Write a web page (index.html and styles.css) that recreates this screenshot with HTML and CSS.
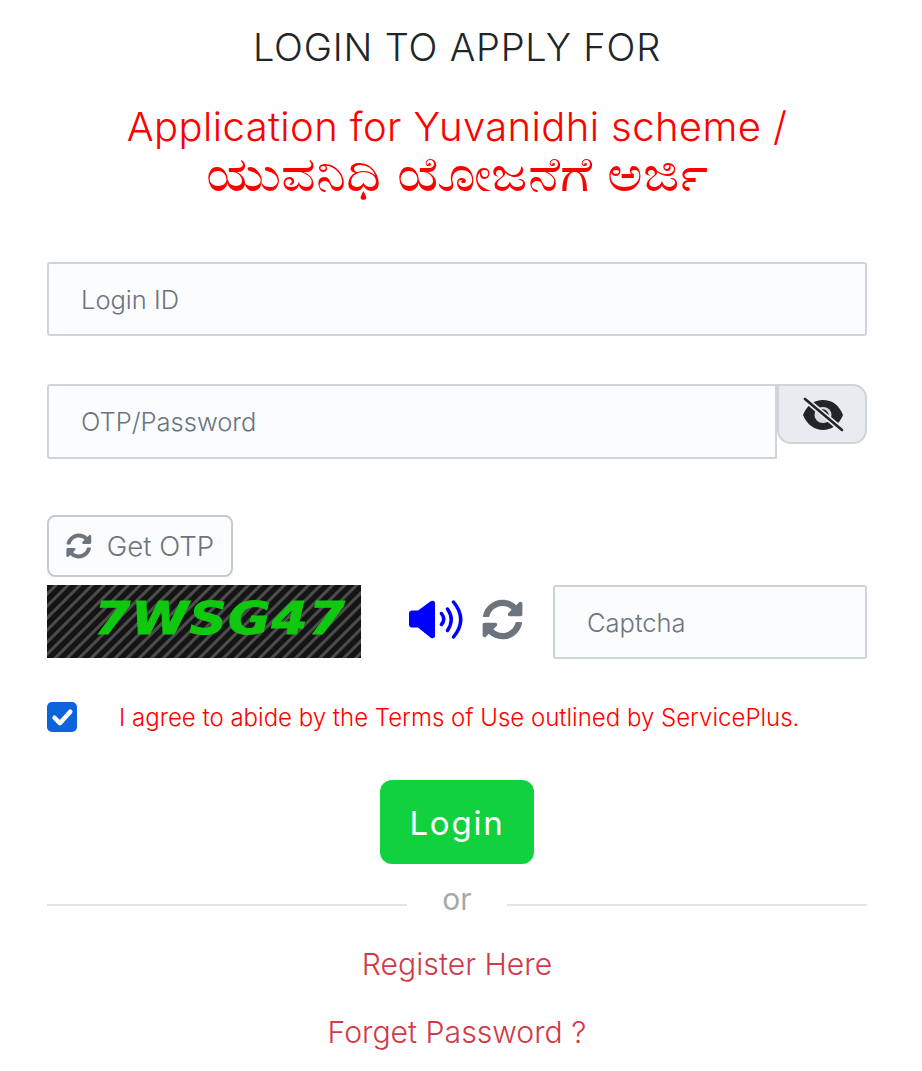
FILE: index.html
```html
<!DOCTYPE html>
<html lang="en">
<head>
  <meta charset="UTF-8">
  <meta name="viewport" content="width=device-width, initial-scale=1.0">
  <title>Login</title>
  <link rel="stylesheet" href="styles.css">
</head>
<body>

  <div class="container">
    <h1 class="title">LOGIN TO APPLY FOR</h1>
    <h2 class="service">Application for Yuvanidhi scheme /<span class="service-kn" lang="kn"><span class="service-kn-text">ಯುವನಿಧಿ ಯೋಜನೆಗೆ ಅರ್ಜಿ</span></span></h2>

    <!-- Login ID -->
    <input class="field field-id" type="text" placeholder="Login ID">

    <!-- Password with eye button -->
    <div class="pass-row">
      <input class="field field-pass" type="text" placeholder="OTP/Password">
      <button class="eye-btn" type="button">
        <svg class="eye-icon" viewBox="0 0 52 46">
          <path d="M7 24C11 14 18 9 27 9s16 5 20 15c-4 10-12 15-20 15S11 34 7 24z" fill="#212529"/>
          <ellipse cx="27" cy="24" rx="8.5" ry="8" fill="#d5dde2"/>
          <path d="M25 18a7 7 0 0 1 8 7l-3 1a4.5 4.5 0 0 0-5-5z" fill="#212529"/>
          <path d="M9 8l37 31" stroke="#e9ecef" stroke-width="6"/>
          <path d="M9 8l37 31" stroke="#212529" stroke-width="2.6" stroke-linecap="round"/>
        </svg>
      </button>
    </div>

    <button class="otp-btn" type="button">
      <svg class="otp-icon" viewBox="0 0 512 512"><path d="M370.72 133.28C339.458 104.008 298.888 87.962 255.848 88c-77.458.068-144.328 53.178-162.791 126.85-1.344 5.363-6.122 9.15-11.651 9.15H24.103c-7.498 0-13.194-6.807-11.807-14.176C33.933 94.924 134.813 8 256 8c66.448 0 126.791 26.136 171.315 68.685L463.03 40.97C478.149 25.851 504 36.559 504 57.941V192c0 13.255-10.745 24-24 24H345.941c-21.382 0-32.09-25.851-16.971-40.971l41.75-41.749zM32 296h134.059c21.382 0 32.09 25.851 16.971 40.971l-41.75 41.75c31.262 29.273 71.835 45.319 114.876 45.28 77.418-.07 144.315-53.144 162.787-126.849 1.344-5.363 6.122-9.15 11.651-9.15h57.304c7.498 0 13.194 6.807 11.807 14.176C478.067 417.076 377.187 504 256 504c-66.448 0-126.791-26.136-171.315-68.685L48.97 471.03C33.851 486.149 8 475.441 8 454.059V320c0-13.255 10.745-24 24-24z"/></svg>
      Get OTP
    </button>

    <!-- Captcha -->
    <div class="captcha-row">
      <div class="captcha-img"><span class="captcha-text">7WSG47</span></div>
      <div class="captcha-icons">
        <svg class="sound-icon" viewBox="0 -0.5 55 39">
          <path d="M3 10H9L22 .5Q26-.5 26 3V35Q26 38.5 22 37.5L9 27H3Q0 27 0 24V13Q0 10 3 10z"/>
          <path class="sound-wave" d="M32.5 13Q37 19 32.5 24M38.5 8.5Q46 19 38.5 30M44.5 1.5Q59 19 44.5 36.5"/>
        </svg>
        <svg class="reload-icon" viewBox="0 0 512 512"><path d="M370.72 133.28C339.458 104.008 298.888 87.962 255.848 88c-77.458.068-144.328 53.178-162.791 126.85-1.344 5.363-6.122 9.15-11.651 9.15H24.103c-7.498 0-13.194-6.807-11.807-14.176C33.933 94.924 134.813 8 256 8c66.448 0 126.791 26.136 171.315 68.685L463.03 40.97C478.149 25.851 504 36.559 504 57.941V192c0 13.255-10.745 24-24 24H345.941c-21.382 0-32.09-25.851-16.971-40.971l41.75-41.749zM32 296h134.059c21.382 0 32.09 25.851 16.971 40.971l-41.75 41.75c31.262 29.273 71.835 45.319 114.876 45.28 77.418-.07 144.315-53.144 162.787-126.849 1.344-5.363 6.122-9.15 11.651-9.15h57.304c7.498 0 13.194 6.807 11.807 14.176C478.067 417.076 377.187 504 256 504c-66.448 0-126.791-26.136-171.315-68.685L48.97 471.03C33.851 486.149 8 475.441 8 454.059V320c0-13.255 10.745-24 24-24z"/></svg>
      </div>
      <input class="field field-captcha" type="text" placeholder="Captcha">
    </div>

    <!-- Terms -->
    <div class="terms">
      <span class="check">
        <svg viewBox="0 0 20 20"><path d="M5 10.5l3.6 3.6L15.5 6.5" fill="none" stroke="#fff" stroke-width="3" stroke-linecap="round" stroke-linejoin="round"/></svg>
      </span>
      <span class="terms-text">I agree to abide by the Terms of Use outlined by ServicePlus.</span>
    </div>

    <div class="login-wrap">
      <button class="login-btn" type="button">Login</button>
    </div>

    <div class="or-row"><span class="or-text">or</span></div>

    <div class="links">
      <a href="#">Register Here</a>
      <a href="#">Forget Password ?</a>
    </div>
  </div>

</body>
</html>
```

FILE: styles.css
```css
* {
  box-sizing: border-box;
}
body {
  margin: 0;
  background-color: #fff;
  font-family: "Inter", "Noto Sans", "DejaVu Sans", sans-serif;
  font-weight: 300;
}
.container {
  width: 820px;
  margin-left: 47px;
  padding-top: 24px;
  height: 1071px;
  overflow: hidden;
}
.title {
  margin: 0;
  font-size: 38px;
  line-height: 46px;
  font-weight: 300;
  letter-spacing: 0.8px;
  color: #212529;
  text-align: center;
}
.service {
  margin: 32px 0 0;
  font-size: 40px;
  line-height: 50px;
  font-weight: 300;
  letter-spacing: 0.4px;
  color: #f00;
  text-align: center;
}
.service-kn {
  display: block;
  height: 50px;
  font-size: 48px;
  letter-spacing: 0;
  overflow: visible;
}
.service-kn-text {
  display: inline-block;
  line-height: 50px;
  transform: translateY(-3px) scaleX(1.13);
}
.field {
  display: block;
  height: 74px;
  padding: 0 32px;
  background-color: #fafcfe;
  border: 2px solid #ced4da;
  border-radius: 3px;
  font-family: inherit;
  font-weight: 300;
  font-size: 25.5px;
  color: #495057;
}
.field::placeholder {
  color: #6c757d;
  opacity: 1;
}
.field-id {
  width: 100%;
  margin-top: 60px;
}
.pass-row {
  display: flex;
  align-items: flex-start;
  margin-top: 48px;
}
.field-pass {
  width: 730px;
  height: 75px;
  border-radius: 3px 0 0 3px;
}
.eye-btn {
  display: flex;
  align-items: center;
  justify-content: center;
  width: 90px;
  height: 60px;
  padding: 0;
  background-color: #e9ecef;
  border: 2px solid #ced4da;
  border-radius: 0 14px 14px 14px;
}
.eye-icon {
  width: 52px;
  height: 46px;
}
.otp-btn {
  display: flex;
  align-items: center;
  gap: 15px;
  width: 186px;
  height: 62px;
  margin-top: 56px;
  padding: 0 17px 1px;
  background-color: #fafcfe;
  border: 2px solid #c6cacd;
  border-radius: 8px;
  font-family: inherit;
  font-weight: 300;
  font-size: 27.6px;
  color: #6c757d;
  white-space: nowrap;
}
.otp-icon {
  width: 26px;
  height: 26px;
  fill: #6c757d;
}
.captcha-row {
  display: flex;
  align-items: flex-start;
  margin-top: 8px;
}
.captcha-img {
  display: flex;
  align-items: center;
  justify-content: flex-end;
  width: 314px;
  height: 73px;
  padding: 0 15px 6px 0;
  background-color: #1c1c1c;
  background-image: repeating-linear-gradient(135deg, #141414 0, #141414 4.5px, #4c4c4c 5.5px, #4c4c4c 7.5px, #141414 8.5px);
}
.captcha-text {
  font-family: "DejaVu Sans", sans-serif;
  font-size: 45px;
  font-weight: 700;
  font-style: italic;
  letter-spacing: 1px;
  color: #10c810;
  -webkit-text-stroke: 1px #10c810;
  transform: scaleX(1.15);
  transform-origin: right center;
}
.captcha-icons {
  display: flex;
  align-items: center;
  gap: 18px;
  width: 192px;
  height: 73px;
  padding: 0 0 4px 48px;
}
.sound-icon {
  width: 55px;
  height: 39px;
  fill: #00f;
}
.sound-wave {
  fill: none;
  stroke: #00f;
  stroke-width: 3.5;
  stroke-linecap: round;
}
.reload-icon {
  width: 41px;
  height: 41px;
  fill: #6c757d;
}
.field-captcha {
  width: 314px;
  height: 74px;
}
.terms {
  display: flex;
  align-items: center;
  margin-top: 43px;
}
.check {
  display: flex;
  width: 30px;
  height: 30px;
  background-color: #0d63dc;
  border-radius: 5px;
}
.terms-text {
  margin-left: 42px;
  font-size: 24px;
  color: #f00;
}
.login-wrap {
  display: flex;
  justify-content: center;
  margin-top: 48px;
}
.login-btn {
  width: 154px;
  height: 84px;
  padding-top: 2px;
  background-color: #11d13f;
  border: none;
  border-radius: 12px;
  font-family: inherit;
  font-weight: 400;
  font-size: 33px;
  letter-spacing: 1.8px;
  color: #fff;
}
.or-row {
  position: relative;
  height: 70px;
  text-align: center;
}
.or-row::before {
  content: "";
  position: absolute;
  left: 0;
  right: 0;
  top: 40px;
  height: 2px;
  background-color: #e4e4e4;
}
.or-text {
  position: relative;
  display: inline-block;
  width: 100px;
  background-color: #fff;
  font-size: 30px;
  font-weight: 400;
  line-height: 70px;
  color: #a8a8a8;
}
.links {
  display: flex;
  flex-direction: column;
  align-items: center;
  gap: 30px;
  margin-top: 11px;
}
.links a {
  font-size: 30.2px;
  line-height: 38px;
  color: #d13a48;
  text-decoration: none;
}
```
